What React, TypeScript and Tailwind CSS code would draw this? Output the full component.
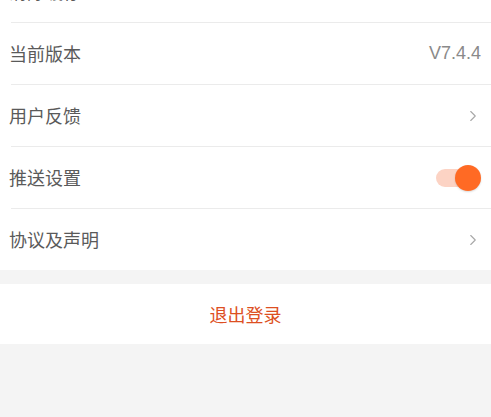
import { ChevronRight } from "lucide-react";

type Row = {
  label: string;
  value?: string;
  arrow?: boolean;
  toggle?: boolean;
};

const rows: Row[] = [
  { label: "清除缓存", value: "0.00M" },
  { label: "当前版本", value: "V7.4.4" },
  { label: "用户反馈", arrow: true },
  { label: "推送设置", toggle: true },
  { label: "协议及声明", arrow: true },
];

function Toggle() {
  return (
    <div className="relative mr-[10px] flex h-[26px] w-[46px] items-center">
      <div className="ml-[1px] h-[18px] w-[34px] rounded-full bg-[#fcd3c4]" />
      <div className="absolute right-0 h-[26px] w-[26px] rounded-full bg-[#ff6a24] shadow-[0_1px_2px_rgba(0,0,0,0.15)]" />
    </div>
  );
}

export default function App() {
  return (
    <div
      className="h-[417px] w-[491px] overflow-hidden bg-[#f4f4f4]"
      style={{ fontFamily: '"Noto Sans CJK SC", "Noto Sans", sans-serif' }}
    >
      <div className="-mt-[39px] bg-white pl-[11px]">
        {rows.map((row, i) => (
          <div
            key={row.label}
            className={
              i < rows.length - 1
                ? "flex h-[62px] items-center border-b border-[#ebebeb]"
                : "flex h-[61px] items-center"
            }
          >
            <span className="-ml-[2px] flex-1 text-[18px] text-[#5a5a5a]">
              {row.label}
            </span>
            {row.value && (
              <span
                className="mr-[10px] text-[18px] text-[#8a8a8a]"
                style={{ fontFamily: '"Liberation Sans", sans-serif' }}
              >
                {row.value}
              </span>
            )}
            {row.arrow && (
              <ChevronRight
                className="mr-[9px] text-[#a8a8a8]"
                size={18}
                strokeWidth={1.5}
              />
            )}
            {row.toggle && <Toggle />}
          </div>
        ))}
      </div>
      <div className="mt-[14px] flex h-[60px] items-center justify-center bg-white">
        <span className="text-[18px] text-[#dd4f22]">退出登录</span>
      </div>
    </div>
  );
}
